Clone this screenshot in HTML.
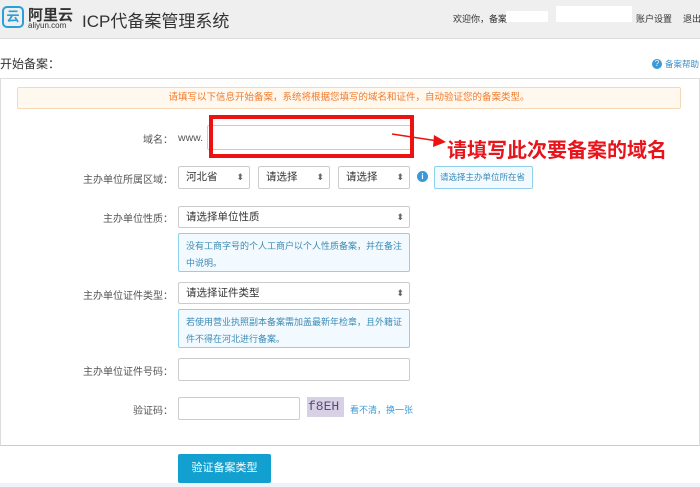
<!DOCTYPE html>
<html><head><meta charset="utf-8"><style>
*{margin:0;padding:0;box-sizing:border-box}
body{width:700px;height:487px;position:relative;overflow:hidden;background:#fff;font-family:"Liberation Sans","Noto Sans CJK SC",sans-serif;font-size:11px;color:#333}
.a{position:absolute;white-space:nowrap}
.hdr{left:0;top:0;width:700px;height:39px;background:#efefef;border-bottom:1px solid #ddd}
.lbl{text-align:right;color:#555;font-size:10px}
.inp{border:1px solid #ccc;border-radius:2px;background:#fff}
.sel{border:1px solid #ccc;border-radius:2px;background:#fff;font-size:10.5px;padding-left:7px;line-height:21px;color:#333}
.sel:after{content:"⬍";position:absolute;right:5px;top:0;font-size:9px;color:#666}
.tip{border:1px solid #8fd0ec;background:#f3faff;color:#3b8bb5;font-size:9px;padding:4px 7px;line-height:17px;border-radius:2px;white-space:normal}
</style></head><body>
<div class="a hdr"></div>
<div class="a" style="left:2px;top:6px;width:22px;height:22px;border:2px solid #2aa0d8;border-radius:5px;color:#2aa0d8;font-size:13px;font-weight:bold;text-align:center;line-height:18px">云</div>
<div class="a" style="left:28px;top:4px;font-size:15px;font-weight:bold;color:#333">阿里云</div>
<div class="a" style="left:28px;top:21px;font-size:8px;color:#333">aliyun.com</div>
<div class="a" style="left:82px;top:7px;font-size:17px;color:#333">ICP代备案管理系统</div>
<div class="a" style="left:453px;top:12px;font-size:9px;color:#333">欢迎你，备案</div>
<div class="a" style="left:506px;top:11px;width:42px;height:11px;background:#fff"></div>
<div class="a" style="left:556px;top:6px;width:76px;height:16px;background:#fff"></div>
<div class="a" style="left:636px;top:12px;font-size:9px;color:#333">账户设置</div>
<div class="a" style="left:683px;top:12px;font-size:9px;color:#333">退出</div>
<div class="a" style="left:0;top:55px;font-size:12px;color:#333">开始备案：</div>
<div class="a" style="left:652px;top:59px;width:10px;height:10px;border-radius:50%;background:#3a9ad9;color:#fff;font-size:8px;text-align:center;line-height:10px">?</div>
<div class="a" style="left:665px;top:58px;font-size:8.5px;color:#3a8fc8">备案帮助</div>
<div class="a" style="left:0;top:78px;width:700px;height:368px;border:1px solid #ddd;border-bottom:1px solid #ccc"></div>
<div class="a" style="left:17px;top:87px;width:664px;height:22px;border:1px solid #f6d8b8;background:#fff8ef;color:#f07a2a;font-size:9.5px;text-align:center;line-height:20px;border-radius:2px">请填写以下信息开始备案，系统将根据您填写的域名和证件，自动验证您的备案类型。</div>
<div class="a lbl" style="right:527px;top:131px">域名：</div>
<div class="a" style="left:178px;top:132px;font-size:10.5px;color:#555">www.</div>
<div class="a inp" style="left:207px;top:125px;width:204px;height:25px"></div>
<div class="a" style="left:209px;top:115px;width:205px;height:43px;border:4px solid #ee1111"></div>
<svg class="a" style="left:388px;top:128px" width="60" height="22"><line x1="4" y1="6" x2="50" y2="13" stroke="#e11" stroke-width="1.5"/><polygon points="58,14 46,7 45,19" fill="#e11"/></svg>
<div class="a" style="left:447px;top:134px;font-size:20px;font-weight:bold;color:#e8141b">请填写此次要备案的域名</div>
<div class="a lbl" style="right:527px;top:171px">主办单位所属区域：</div>
<div class="a sel" style="left:178px;top:166px;width:72px;height:23px">河北省</div>
<div class="a sel" style="left:258px;top:166px;width:72px;height:23px">请选择</div>
<div class="a sel" style="left:338px;top:166px;width:72px;height:23px">请选择</div>
<div class="a" style="left:417px;top:171px;width:11px;height:11px;border-radius:50%;background:#3a9ad9;color:#fff;font-size:8px;text-align:center;line-height:11px;font-weight:bold">i</div>
<div class="a tip" style="left:434px;top:166px;width:99px;height:23px;padding:0 5px;line-height:21px;white-space:nowrap;font-size:8.5px">请选择主办单位所在省</div>
<div class="a lbl" style="right:527px;top:210px">主办单位性质：</div>
<div class="a sel" style="left:178px;top:206px;width:232px;height:22px">请选择单位性质</div>
<div class="a tip" style="left:178px;top:233px;width:232px;height:39px">没有工商字号的个人工商户以个人性质备案，并在备注中说明。</div>
<div class="a lbl" style="right:527px;top:287px">主办单位证件类型：</div>
<div class="a sel" style="left:178px;top:282px;width:232px;height:22px">请选择证件类型</div>
<div class="a tip" style="left:178px;top:309px;width:232px;height:39px">若使用营业执照副本备案需加盖最新年检章，且外籍证件不得在河北进行备案。</div>
<div class="a lbl" style="right:527px;top:363px">主办单位证件号码：</div>
<div class="a inp" style="left:178px;top:358px;width:232px;height:23px"></div>
<div class="a lbl" style="right:527px;top:402px">验证码：</div>
<div class="a inp" style="left:178px;top:397px;width:122px;height:23px"></div>
<div class="a" style="left:307px;top:397px;width:37px;height:20px;background:#d8d0e4;color:#5a4a7a;font-size:13px;font-family:'Liberation Mono',monospace;line-height:20px;padding-left:1px">f8EH</div>
<div class="a" style="left:350px;top:403px;font-size:9px;color:#3a9ad9">看不清，换一张</div>
<div class="a" style="left:178px;top:454px;width:93px;height:29px;background:#12a0d0;border-radius:2px;color:#fff;font-size:11px;text-align:center;line-height:29px">验证备案类型</div>
<div class="a" style="left:0;top:483px;width:700px;height:4px;background:#eef3f8"></div>
</body></html>
